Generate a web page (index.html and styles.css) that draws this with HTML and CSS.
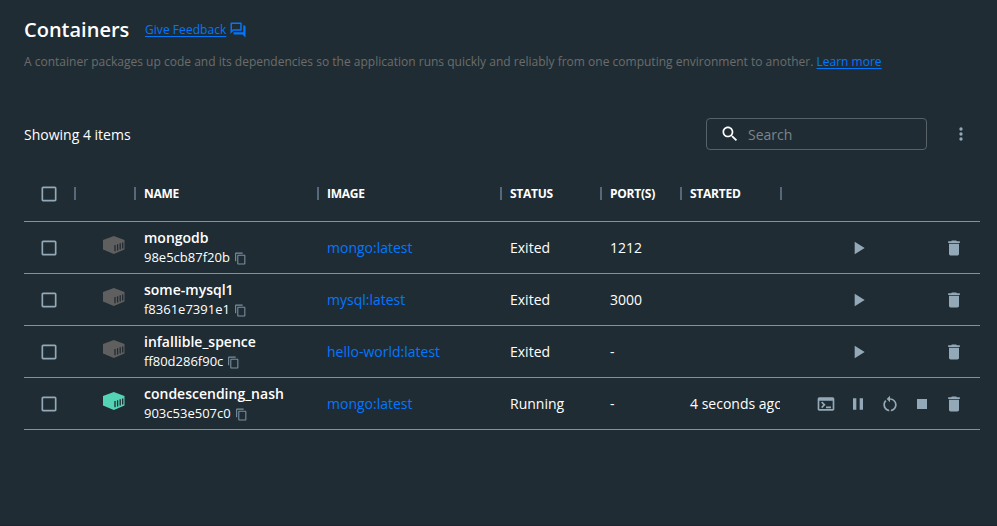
FILE: index.html
```html
<!DOCTYPE html>
<html lang="en">
<head>
<meta charset="utf-8">
<title>Containers</title>
<link rel="stylesheet" href="styles.css">
</head>
<body>
<svg class="sprite" aria-hidden="true">
  <symbol id="box" viewBox="0 0 24 24"><path d="M19 5v14H5V5h14m0-2H5c-1.100 0-2 .9-2 2v14c0 1.100.9 2 2 2h14c1.100 0 2-.9 2-2V5c0-1.100-.9-2-2-2z"/></symbol>
  <symbol id="chat" viewBox="0 0 24 24"><path d="M15 4v7H5.170L4 12.170V4h11m1-2H3c-.55 0-1 .45-1 1v14l4-4h10c.55 0 1-.45 1-1V3c0-.55-.45-1-1-1zm5 4h-2v9H6v2c0 .55.45 1 1 1h11l4 4V7c0-.55-.45-1-1-1z"/></symbol>
  <symbol id="search" viewBox="0 0 24 24"><path d="M15.500 14h-.79l-.28-.27C15.410 12.590 16 11.110 16 9.500 16 5.910 13.090 3 9.500 3S3 5.910 3 9.500 5.910 16 9.500 16c1.610 0 3.090-.59 4.230-1.570l.27.28v.79l5 4.990L20.490 19l-4.990-5zm-6 0C7.010 14 5 11.990 5 9.500S7.010 5 9.500 5 14 7.010 14 9.500 11.990 14 9.500 14z"/></symbol>
  <symbol id="more" viewBox="0 0 24 24"><circle cx="12" cy="6" r="2"/><circle cx="12" cy="12" r="2"/><circle cx="12" cy="18" r="2"/></symbol>
  <symbol id="copy" viewBox="0 0 24 24"><path d="M16 1H4c-1.100 0-2 .9-2 2v14h2V3h12V1zm3 4H8c-1.100 0-2 .9-2 2v14c0 1.100.9 2 2 2h11c1.100 0 2-.9 2-2V7c0-1.100-.9-2-2-2zm0 16H8V7h11v14z"/></symbol>
  <symbol id="play" viewBox="0 0 24 24"><path d="M8 4.500v15L20 12z"/></symbol>
  <symbol id="terminal" viewBox="0 0 24 24"><path d="M20 4H4c-1.110 0-2 .9-2 2v12c0 1.100.89 2 2 2h16c1.100 0 2-.9 2-2V6c0-1.100-.89-2-2-2zm0 14H4V8h16v10zm-2-1h-6v-2h6v2zM7.500 17l-1.410-1.410L8.670 13l-2.590-2.590L7.500 9l4 4-4 4z"/></symbol>
  <symbol id="pause" viewBox="0 0 24 24"><path d="M6 19h4V5H6v14zm8-14v14h4V5h-4z"/></symbol>
  <symbol id="restart" viewBox="0 0 24 24"><path d="M12 5V2L8 6l4 4V7c3.310 0 6 2.690 6 6 0 2.970-2.170 5.430-5 5.910v2.020c3.950-.49 7-3.850 7-7.930 0-4.420-3.580-8-8-8zm-6 8c0-1.650.67-3.150 1.760-4.240L6.340 7.340C4.900 8.790 4 10.790 4 13c0 4.080 3.050 7.440 7 7.930v-2.020c-2.830-.48-5-2.940-5-5.910z"/></symbol>
  <symbol id="stop" viewBox="0 0 24 24"><path d="M6 6h12v12H6z"/></symbol>
  <symbol id="trash" viewBox="0 0 24 24"><path d="M6 19c0 1.100.9 2 2 2h8c1.100 0 2-.9 2-2V7H6v12zM19 4h-3.500l-1-1h-5l-1 1H5v2h14V4z"/></symbol>
  <symbol id="crate" viewBox="0 0 22 18"><path d="M10.800 0 21.500 4v9.500L10.800 18 0 13.500V4z"/><path class="slats" d="M12 9v6.300M14.600 8.200v6.300M17.200 7.300v6.300M19.700 6.500v6"/></symbol>
</svg>

<header class="page-head">
  <div class="title-row">
    <h1>Containers</h1>
    <a class="link feedback"><span>Give Feedback</span><svg><use href="#chat"/></svg></a>
  </div>
  <p class="lead">A container packages up code and its dependencies so the application runs quickly and reliably from one computing environment to another. <a class="link">Learn more</a></p>
</header>

<div class="toolbar">
  <span class="count">Showing 4 items</span>
  <div class="search"><svg><use href="#search"/></svg><span>Search</span></div>
  <svg class="more"><use href="#more"/></svg>
</div>

<main class="table">
  <div class="row head">
    <div class="check"><svg><use href="#box"/></svg></div>
    <div></div>
    <div><span>NAME</span></div>
    <div><span>IMAGE</span></div>
    <div><span>STATUS</span></div>
    <div><span>PORT(S)</span></div>
    <div><span>STARTED</span></div>
    <div></div>
  </div>
  <div class="row">
    <div class="check"><svg><use href="#box"/></svg></div>
    <div class="crate"><svg><use href="#crate"/></svg></div>
    <div class="name"><b>mongodb</b><span>98e5cb87f20b<svg><use href="#copy"/></svg></span></div>
    <div class="image">mongo:latest</div>
    <div>Exited</div>
    <div>1212</div>
    <div></div>
    <div class="actions"><i></i><svg><use href="#play"/></svg><i></i><i></i><svg><use href="#trash"/></svg></div>
  </div>
  <div class="row">
    <div class="check"><svg><use href="#box"/></svg></div>
    <div class="crate"><svg><use href="#crate"/></svg></div>
    <div class="name"><b>some-mysql1</b><span>f8361e7391e1<svg><use href="#copy"/></svg></span></div>
    <div class="image">mysql:latest</div>
    <div>Exited</div>
    <div>3000</div>
    <div></div>
    <div class="actions"><i></i><svg><use href="#play"/></svg><i></i><i></i><svg><use href="#trash"/></svg></div>
  </div>
  <div class="row">
    <div class="check"><svg><use href="#box"/></svg></div>
    <div class="crate"><svg><use href="#crate"/></svg></div>
    <div class="name"><b>infallible_spence</b><span>ff80d286f90c<svg><use href="#copy"/></svg></span></div>
    <div class="image">hello-world:latest</div>
    <div>Exited</div>
    <div>-</div>
    <div></div>
    <div class="actions"><i></i><svg><use href="#play"/></svg><i></i><i></i><svg><use href="#trash"/></svg></div>
  </div>
  <div class="row">
    <div class="check"><svg><use href="#box"/></svg></div>
    <div class="crate running"><svg><use href="#crate"/></svg></div>
    <div class="name"><b>condescending_nash</b><span>903c53e507c0<svg><use href="#copy"/></svg></span></div>
    <div class="image">mongo:latest</div>
    <div>Running</div>
    <div>-</div>
    <div>4 seconds ago</div>
    <div class="actions"><svg><use href="#terminal"/></svg><svg><use href="#pause"/></svg><svg><use href="#restart"/></svg><svg><use href="#stop"/></svg><svg><use href="#trash"/></svg></div>
  </div>
</main>
</body>
</html>
```
FILE: styles.css
```css
* { box-sizing: border-box; }

body {
  margin: 0;
  height: 526px;
  padding: 16px 17px 0 24px;
  overflow: hidden;
  background: #202c33;
  border-bottom: 1px solid #1b2330;
  color: #fff;
  font: 14px/20px "Open Sans", "Noto Sans", sans-serif;
}

svg { display: block; flex: none; fill: currentColor; }
.sprite { position: absolute; width: 0; height: 0; }

.page-head { height: 102px; }
.title-row { display: flex; align-items: center; height: 28px; }
h1 { margin: 0; width: 121px; font-size: 20px; line-height: 28px; font-weight: 600; }
.link { color: #0077ff; text-decoration: underline; text-underline-offset: 2px; text-decoration-thickness: 1px; }
.feedback { display: flex; align-items: center; gap: 3px; font-size: 12px; letter-spacing: 0.05px; }
.feedback svg { width: 18px; height: 18px; }
.lead { margin: 8px 0 0; color: #6c6c6c; font-size: 12px; line-height: 20px; letter-spacing: 0.007px; white-space: nowrap; }

.toolbar { display: flex; align-items: center; height: 32px; }
.count { flex: 1; padding-top: 2px; }
.search {
  display: flex;
  align-items: center;
  gap: 8px;
  width: 221px;
  height: 32px;
  padding-left: 13px;
  border: 1px solid #566168;
  border-radius: 4px;
  color: #7c8489;
}
.search svg { width: 20px; height: 20px; color: #fff; }
.search span { padding-top: 2px; }
.more { width: 20px; height: 20px; margin: 0 9px 0 24px; color: #93a9b8; }

.table { padding-top: 16px; width: 956px; }
.row {
  display: grid;
  grid-template-columns: 50px 60px 183px 183px 100px 80px 100px 200px;
  height: 52px;
  border-bottom: 1px solid #7794ab;
}
.row > div {
  display: flex;
  align-items: center;
  min-width: 0;
  padding-left: 10px;
  overflow: hidden;
  white-space: nowrap;
}
.head { height: 56px; font-size: 12px; font-weight: 700; letter-spacing: -0.25px; }
.head > div { overflow: visible; }
.head > div:not(:last-child)::after {
  content: "";
  width: 2px;
  height: 13px;
  margin: 0 -2px 0 auto;
  background: #56697a;
}
.row > .check { padding-left: 15px; color: #93a9b8; }
.check svg { width: 20px; height: 20px; }

.row > .crate { padding: 0 0 5px 29px; color: #5f5f5f; }
.row > .running { color: #55d4b5; }
.crate svg { width: 22px; height: 18px; }
.slats { fill: none; stroke: #202c33; stroke-width: 1.3px; }

.row > .name { flex-direction: column; align-items: flex-start; padding-top: 6px; }
.name b { font-weight: 600; line-height: 20px; }
.name span { display: flex; align-items: center; gap: 4px; font-size: 13px; line-height: 20px; margin-top: -1px; }
.name span svg { width: 13px; height: 13px; margin-top: 2px; color: #7890a2; }
.image { color: #0077ff; }

.row > .actions { gap: 12px; padding-left: 36px; color: #93a9b8; }
.actions svg, .actions i { flex: none; width: 20px; height: 20px; }
```
